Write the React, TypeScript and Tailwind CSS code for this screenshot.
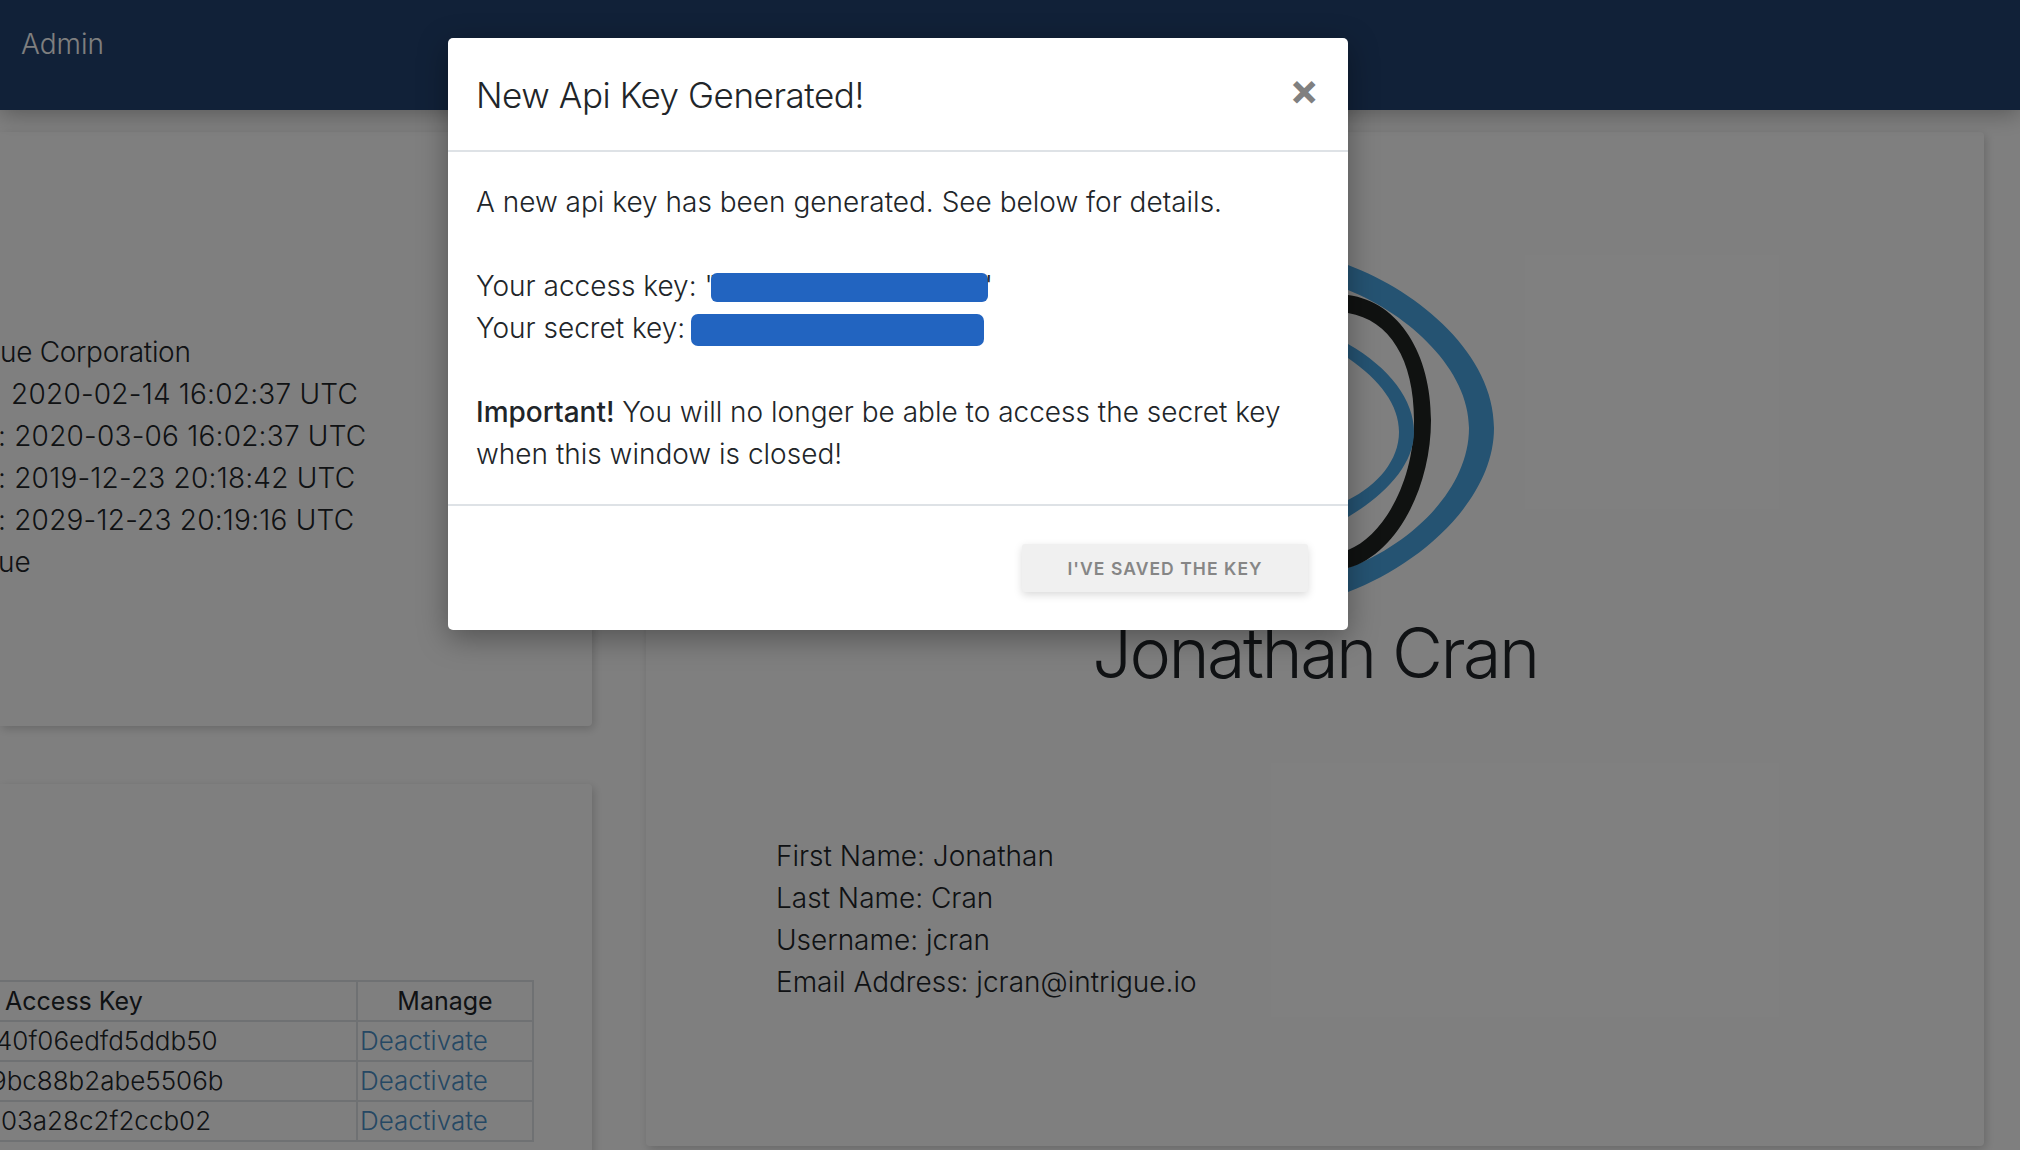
const summary = [
  { text: "ue Corporation", style: "pl-0 tracking-[-0.3px]" },
  { text: " 2020-02-14 16:02:37 UTC", style: "pl-[3px] tracking-[0.22px]" },
  { text: ": 2020-03-06 16:02:37 UTC", style: "-ml-[2px] tracking-[0.22px]" },
  { text: ": 2019-12-23 20:18:42 UTC", style: "-ml-[2px] tracking-[0.22px]" },
  { text: ": 2029-12-23 20:19:16 UTC", style: "-ml-[2px] tracking-[0.22px]" },
  { text: "ue", style: "-ml-[2px]" },
];

const keys = [
  { text: "40f06edfd5ddb50", offset: "-ml-[6px]" },
  { text: "9bc88b2abe5506b", offset: "-ml-[11px]" },
  { text: "03a28c2f2ccb02", offset: "-ml-[1px]" },
];

const profile = [
  "First Name: Jonathan",
  "Last Name: Cran",
  "Username: jcran",
  "Email Address: jcran@intrigue.io",
];

function Logo() {
  return (
    <svg viewBox="1130 250 370 360" className="mx-auto block h-[360px] w-[370px]" aria-hidden="true">
      <path
        fill="#4aa6e4"
        d="M1300 252 L1348 265 C1420 292 1494 355 1494 428 C1494 500 1420 565 1348 592 L1300 604 L1300 582 L1348 568 C1410 545 1469 490 1469 428 C1469 370 1410 315 1348 290 L1300 276 Z"
      />
      <path
        fill="#202422"
        d="M1300 290 L1348 295 C1400 302 1431 355 1431 420 C1431 490 1395 555 1348 568 L1300 574 L1300 556 L1348 550 C1385 535 1414 480 1414 420 C1414 360 1390 320 1348 313 L1300 308 Z"
      />
      <path
        fill="#4aa6e4"
        d="M1300 330 L1348 344 C1390 368 1414 400 1414 432 C1414 465 1385 495 1348 517 L1300 530 L1300 512 L1348 500 C1378 485 1399 460 1399 432 C1399 405 1380 380 1348 358 L1300 346 Z"
      />
    </svg>
  );
}

function App() {
  return (
    <div className="relative h-[1150px] w-[2020px] overflow-hidden bg-white font-['Inter',sans-serif] text-[28px] font-light leading-[42px] text-[#212529]">
      <header className="relative z-10 flex h-[110px] items-start bg-[#224270] pl-[21px] pt-[23px] text-white shadow-[0_4px_22px_rgba(0,0,0,0.3)]">
        <span className="text-[28px] leading-[42px]">Admin</span>
      </header>

      <main className="flex gap-[54px] pt-[22px]">
        <div className="flex w-[592px] shrink-0 flex-col gap-[58px]">
          <section className="h-[594px] rounded-r-[4px] bg-white pt-[199px] shadow-[2px_3px_10px_rgba(0,0,0,0.18)]">
            {summary.map((line) => (
              <div key={line.text} className={`whitespace-pre ${line.style}`}>
                {line.text}
              </div>
            ))}
          </section>

          <section className="h-[400px] rounded-r-[4px] bg-white pt-[196px] shadow-[2px_3px_10px_rgba(0,0,0,0.18)]">
            <table className="-ml-[6px] w-[540px] table-fixed border-collapse text-[26px] leading-[38px]">
              <thead>
                <tr>
                  <th className="w-[362px] border-2 border-[#dee2e6] pl-[9px] text-left text-[25px] font-normal">Access Key</th>
                  <th className="border-2 border-[#dee2e6] text-center text-[25px] font-normal">Manage</th>
                </tr>
              </thead>
              <tbody>
                {keys.map((key) => (
                  <tr key={key.text}>
                    <td className="overflow-hidden whitespace-nowrap border-2 border-[#dee2e6] pl-[6px]">
                      <span className={`block ${key.offset}`}>{key.text}</span>
                    </td>
                    <td className="border-2 border-[#dee2e6] pl-[2px]">
                      <a href="#" className="text-[#4a90c8]">Deactivate</a>
                    </td>
                  </tr>
                ))}
              </tbody>
            </table>
          </section>
        </div>

        <section className="h-[1014px] w-[1338px] shrink-0 rounded-[4px] bg-white pt-[118px] shadow-[2px_3px_10px_rgba(0,0,0,0.18)]">
          <Logo />
          <h1 className="mt-px text-center text-[70px] font-light leading-[84px] tracking-[-2.5px]">Jonathan Cran</h1>
          <div className="mt-[140px] pl-[130px]">
            {profile.map((line) => (
              <div key={line}>{line}</div>
            ))}
          </div>
        </section>
      </main>

      <div className="absolute inset-0 z-20 bg-black/50" />

      <div className="absolute left-[448px] top-[38px] z-30 w-[900px] rounded-[5px] bg-white shadow-[0_8px_30px_rgba(0,0,0,0.35)]">
        <div className="flex h-[114px] items-start justify-between border-b-2 border-[#dee2e6] px-[28px] pt-[31px]">
          <h5 className="text-[35px] font-light leading-[52px] tracking-[-0.45px]">New Api Key Generated!</h5>
          <button type="button" className="mr-px -mt-[6px] text-[44px] font-bold leading-[52px] text-[#808080]">×</button>
        </div>
        <div className="border-b-2 border-[#dee2e6] p-[29px] pl-[28px] pr-[28px]">
          <p>A new api key has been generated. See below for details.</p>
          <br />
          <p>
            Your access key: "
            <span className="-ml-[6px] -mt-[1px] inline-block h-[29px] w-[277px] rounded-[6px] bg-[#2264c0] align-middle" />
            <span className="-ml-[3px]">'</span>
          </p>
          <p>
            Your secret key:{" "}
            <span className="-ml-[2px] inline-block h-[32px] w-[293px] rounded-[7px] bg-[#2264c0] align-middle" />
          </p>
          <br />
          <p>
            <strong className="font-medium">Important!</strong> You will no longer be able to access the secret key when this window is closed!
          </p>
        </div>
        <div className="flex h-[124px] items-start justify-end pr-[40px] pt-[38px]">
          <button
            type="button"
            className="h-[48px] w-[286px] rounded-[3px] bg-[#f0f0f0] pt-[2px] text-[17.5px] font-semibold uppercase tracking-[0.06em] text-[#868686] shadow-[0_3px_8px_rgba(0,0,0,0.15)]"
          >
            I've saved the key
          </button>
        </div>
      </div>
    </div>
  );
}

export default App;
